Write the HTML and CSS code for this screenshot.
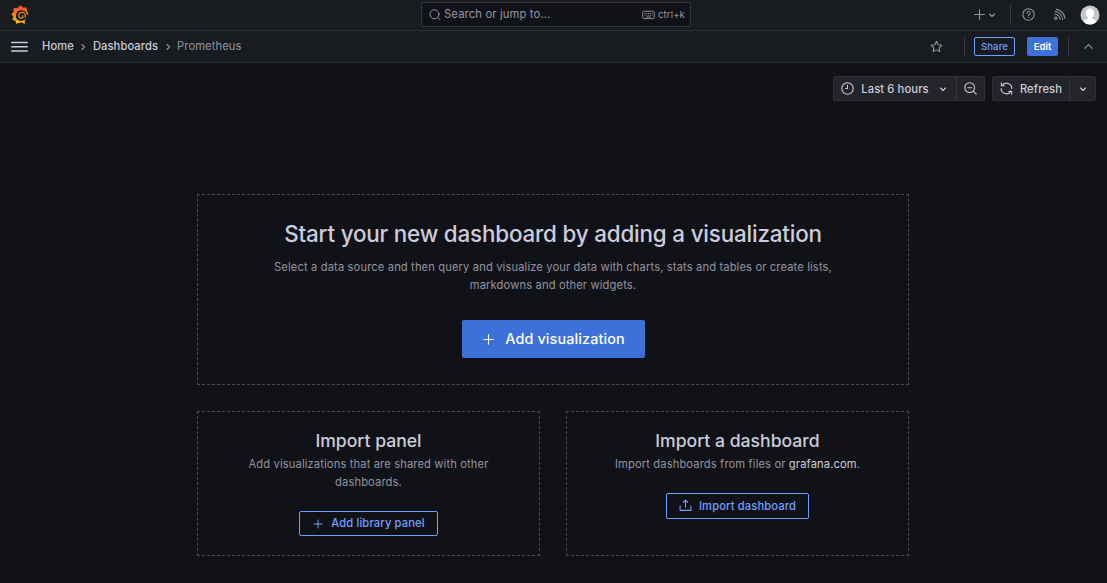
FILE: index.html
```html
<!DOCTYPE html>
<html lang="en">
<head>
<meta charset="utf-8">
<title>Prometheus - Dashboards - Grafana</title>
<link rel="stylesheet" href="styles.css">
</head>
<body>
<header class="topbar">
  <svg class="logo" viewBox="0 0 18 20">
    <defs><linearGradient id="flame" gradientUnits="userSpaceOnUse" x1="0" y1="0" x2="0" y2="20"><stop offset="0.2" stop-color="#f05a28"/><stop offset="0.95" stop-color="#fbca0a"/></linearGradient></defs>
    <path fill="url(#flame)" fill-rule="evenodd" d="M9.600 0.200 11.800 2.400 15.600 2.600 15.900 5.400Q17.300 7.400 17.300 9.600L15.800 9.800 15.300 13 14 15.300 13.600 19 10.500 17.300 5.200 18.800 4.600 15.900 1.400 14.600 2.400 11.400 0.200 8.900 2.600 6.900 2.400 3.300 6.300 3.100ZM10.800 5.200A5.400 5.400 0 1 0 15.200 13L15.800 10A5.300 5.300 0 0 0 10.800 5.200Z"/>
    <path fill="none" stroke="url(#flame)" stroke-width="1.200" stroke-linecap="round" d="M14.200 12C14.800 9 13 7.300 11 7.300C8.900 7.300 7.700 8.800 7.700 10.500C7.700 12.300 9.100 13.400 10.600 13.100C11.900 12.800 12.300 11.400 11.500 10.600"/>
  </svg>
  <div class="search">
    <svg class="i12" viewBox="0 0 24 24"><circle cx="11" cy="10.500" r="9"/><path d="m17.500 17 4.500 4.500"/></svg>
    <span class="search-label">Search or jump to...</span>
    <svg class="keyboard" viewBox="0 0 13 10"><rect x=".7" y="1.200" width="11.600" height="7.400" rx="1"/><path d="M2.500 3.500h8M2.500 5.200h8" stroke-dasharray="1 .8"/><path d="M4 7h5"/></svg>
    <span class="shortcut">ctrl+k</span>
  </div>
  <div class="top-actions">
    <svg class="i13 plus" viewBox="0 0 24 24"><path d="M12 3v18M3 12h18"/></svg>
    <svg class="i10 chev" viewBox="0 0 24 24"><path d="m7 10 5 5 5-5"/></svg>
    <i class="divider top-divider"></i>
    <svg class="i13 help" viewBox="0 0 24 24"><circle cx="12" cy="12" r="10.500"/><path d="M9 9.500a3 3 0 1 1 4 2.800q-1 .5-1 1.700M12 17v.5"/></svg>
    <svg class="i13 rss" viewBox="0 0 24 24"><path d="M3 11a10 10 0 0 1 10 10M4 6.500A14.500 14.500 0 0 1 17.500 21M6 2.500A18 18 0 0 1 22 19"/><circle cx="5" cy="19" r="2.200"/></svg>
    <svg class="avatar" viewBox="0 0 20 20"><defs><clipPath id="round"><circle cx="10" cy="10" r="9.500"/></clipPath></defs><g clip-path="url(#round)"><path fill="#c6c6c6" d="M0 0h20v20H0z"/><ellipse cx="10" cy="8.300" rx="4.100" ry="4.800" fill="#fff"/><path fill="#fff" d="M8 11h4v2.500l4 1.800V20H4v-4.700l4-1.800z"/></g></svg>
  </div>
</header>
<nav class="navbar">
  <svg class="menu" viewBox="0 0 17 12"><path d="M.8 1.500h15.400M.8 5.700h15.400M.8 10h15.400"/></svg>
  <div class="crumbs">
    <a>Home</a>
    <svg class="i10 crumb-sep" viewBox="0 0 24 24"><path d="m10 7 5 5-5 5"/></svg>
    <a>Dashboards</a>
    <svg class="i10 crumb-sep" viewBox="0 0 24 24"><path d="m10 7 5 5-5 5"/></svg>
    <span class="current">Prometheus</span>
  </div>
  <div class="nav-actions">
    <svg class="i13 star" viewBox="0 0 24 24"><path d="m12 2.500 3 6.300 6.800 1-4.900 4.800 1.200 6.900-6.100-3.300-6.100 3.300 1.200-6.900-4.900-4.800 6.800-1z"/></svg>
    <i class="divider star-divider"></i>
    <button class="btn small outline share">Share</button>
    <button class="btn small primary edit">Edit</button>
    <i class="divider edit-divider"></i>
    <svg class="i13 collapse" viewBox="0 0 24 24"><path d="m5 15.500 7-7 7 7"/></svg>
  </div>
</nav>
<div class="controls">
  <div class="group time">
    <button class="tool range"><svg class="i13" viewBox="0 0 24 24"><circle cx="12" cy="12" r="10.500"/><path d="M12 6v6H8.500"/></svg><span>Last 6 hours</span><svg class="i10" viewBox="0 0 24 24"><path d="m7 10 5 5 5-5"/></svg></button>
    <button class="tool zoom-out"><svg class="i13" viewBox="0 0 24 24"><circle cx="10.500" cy="10.500" r="9"/><path d="M7 10.500h7m3 6.500 5.500 5.500"/></svg></button>
  </div>
  <div class="group">
    <button class="tool refresh"><svg class="i13" viewBox="0 0 24 24"><path d="M2.500 1.500v5.500H8M3.500 7A10 10 0 0 1 22 12M21.500 22.500V17H16M20.500 17A10 10 0 0 1 2 12"/></svg><span>Refresh</span></button>
    <button class="tool interval"><svg class="i10" viewBox="0 0 24 24"><path d="m7 10 5 5 5-5"/></svg></button>
  </div>
</div>
<main class="empty">
  <section class="card hero">
    <h1>Start your new dashboard by adding a visualization</h1>
    <p>Select a data source and then query and visualize your data with charts, stats and tables or create lists,<br>markdowns and other widgets.</p>
    <button class="btn large primary"><svg class="i13" viewBox="0 0 24 24"><path d="M12 3.500v17M3.500 12h17"/></svg><span>Add visualization</span></button>
  </section>
  <div class="pair">
    <section class="card">
      <h3>Import panel</h3>
      <p>Add visualizations that are shared with other<br>dashboards.</p>
      <button class="btn outline library"><svg class="i12" viewBox="0 0 24 24"><path d="M12 4v16M4 12h16"/></svg><span>Add library panel</span></button>
    </section>
    <section class="card">
      <h3>Import a dashboard</h3>
      <p>Import dashboards from files or <a>grafana.com</a>.</p>
      <button class="btn outline import"><svg class="i13" viewBox="0 0 24 24"><path d="M12 15V2M8 6l4-4 4 4M2 13v8h20v-8"/></svg><span>Import dashboard</span></button>
    </section>
  </div>
</main>
</body>
</html>
```
FILE: styles.css
```css
* { box-sizing: border-box; }
body { margin: 0; height: 583px; overflow: hidden; background: #111217; color: #ccccdc; font: 500 11.2px/17.6px Inter, sans-serif; letter-spacing: .12px; }
svg { display: block; flex: none; fill: none; stroke: currentColor; stroke-width: 2; stroke-linecap: round; stroke-linejoin: round; }
.i10 { width: 12px; height: 12px; stroke-width: 2.200; }
.i12 { width: 12px; height: 12px; }
.i13 { width: 13px; height: 13px; }
h1, h3, p { margin: 0; }
button { font: inherit; letter-spacing: inherit; color: inherit; margin: 0; padding: 0; }
.topbar, .navbar { display: flex; align-items: center; background: #181b1f; border-bottom: 1px solid #2c2e34; }
.topbar { height: 31px; padding: 0 7px 0 11px; }
.navbar { height: 32px; padding: 0 12px 0 11px; }
.logo { width: 18px; height: 20px; stroke: none; margin-bottom: 1px; }
.search { display: flex; align-items: center; width: 270px; height: 25px; margin-left: 392px; margin-top: -1px; padding: 0 5px 0 7px; background: #111217; border: 1px solid #36373d; border-radius: 2px; color: #9596a2; font-weight: 400; }
.search-label { margin-left: 3px; letter-spacing: .16px; }
.keyboard { width: 13px; height: 10px; margin-left: auto; stroke-width: .9; stroke-linecap: butt; }
.shortcut { margin-left: 3px; font-size: 9.600px; }
.top-actions, .nav-actions { display: flex; align-items: center; margin-left: auto; color: #9495a1; }
.top-actions { margin-top: -1px; }
.divider { width: 1px; height: 19px; background: #3c3d43; }
.top-divider { margin: 0 11px 0 12px; }
.help { margin-right: 18px; }
.avatar { width: 20px; height: 20px; margin-left: 14px; stroke: none; }
.menu { width: 17px; height: 12px; stroke-width: 1.600; }
.crumbs { display: flex; align-items: center; margin-left: 14px; gap: 3.500px; letter-spacing: .08px; }
.crumb-sep, .current { color: #92939e; }
.current { font-weight: 400; }
.star-divider { margin: 0 9px 0 21px; }
.btn { display: inline-flex; align-items: center; justify-content: center; border: 1px solid transparent; border-radius: 2px; }
.primary { background: #3d71d9; color: #fff; }
.outline { background: transparent; border-color: #6e9fff; color: #6e9fff; }
.small { height: 19px; font-size: 9.600px; }
.share { width: 41px; }
.edit { width: 31px; margin-left: 12px; font-weight: 600; letter-spacing: 0; }
.edit-divider { margin: 0 13px 0 10px; }
.controls { display: flex; justify-content: flex-end; gap: 7px; padding: 13px 11px 0 0; }
.group { display: flex; height: 25px; background: #24252b; border: 1px solid #303137; border-radius: 2px; }
.tool { display: flex; align-items: center; justify-content: center; border: 0; background: none; }
.tool span { padding-top: 2px; }
.tool + .tool { border-left: 1px solid #36373d; }
.range { width: 122px; }
.range span { margin: 0 8px 0 7px; }
.zoom-out { width: 28px; }
.refresh { width: 76px; }
.refresh span { margin-left: 7px; }
.interval { width: 26px; }
.empty { width: 712px; margin: 93px 0 0 197px; }
.card { display: flex; flex-direction: column; align-items: center; border: 1px dashed #4a4b51; text-align: center; }
.card p { color: #9192a0; font-weight: 400; }
.card p a { color: #ccccdc; }
.hero { height: 191px; padding-top: 25px; }
h1 { font-size: 22.400px; line-height: 28px; font-weight: 500; letter-spacing: -.18px; }
.hero p { margin-top: 11px; }
.large { width: 183px; height: 38px; margin-top: 26px; font-size: 14.400px; gap: 10px; letter-spacing: .12px; padding-left: 1px; }
.pair { display: grid; grid-template-columns: 1fr 1fr; gap: 26px; margin-top: 26px; }
.pair .card { height: 145px; padding-top: 18px; }
h3 { font-size: 17.600px; line-height: 22px; font-weight: 500; letter-spacing: 0; }
.pair p { margin-top: 4px; }
.library, .import { gap: 7px; }
.library { width: 139px; height: 25px; margin-top: 20px; }
.import { width: 143px; height: 26px; margin-top: 19px; }
.import span { padding-top: 2px; }
```
